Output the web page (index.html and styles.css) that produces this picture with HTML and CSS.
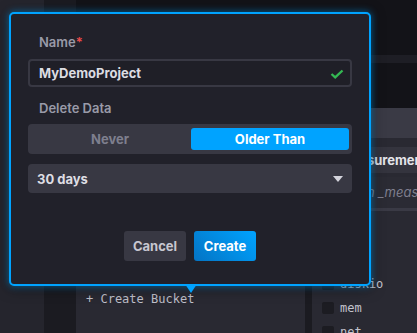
FILE: index.html
```html
<html>

<head>
	<link rel="stylesheet" href="styles.css">
</head>

<body>
	<div class="app">
		<div class="nav"></div>
		<div class="gutter"></div>
		<div class="main">
			<div class="topBar">
				<div class="topBand"></div>
			</div>
			<div class="panels">
				<div class="panel bucketPanel">
					<div class="panelBody"></div>
					<div class="createBucket">+ Create Bucket</div>
				</div>
				<div class="divider"></div>
				<div class="panel tagPanel">
					<div class="panelHeader"></div>
					<div class="tagSelect">_measurement</div>
					<div class="tagSearch">Search _measurement</div>
					<div class="tagList">
						<div class="tagItem"><span class="checkbox"></span>cpu</div>
						<div class="tagItem"><span class="checkbox"></span>disk</div>
						<div class="tagItem"><span class="checkbox"></span>diskio</div>
						<div class="tagItem"><span class="checkbox"></span>mem</div>
						<div class="tagItem"><span class="checkbox"></span>net</div>
					</div>
				</div>
			</div>
		</div>
	</div>

	<div class="popover">
		<div class="fieldLabel">Name<span class="required">*</span></div>
		<div class="textInput">
			<span class="inputValue">MyDemoProject</span>
			<svg class="check" width="14" height="10" viewBox="0 0 14 10">
				<polyline points="1.5,5 5.2,8.4 12.5,1.5" fill="none" stroke="#34b853" stroke-width="2.3" />
			</svg>
		</div>
		<div class="fieldLabel spaced">Delete Data</div>
		<div class="toggle">
			<div class="toggleButton">Never</div>
			<div class="toggleButton active">Older Than</div>
		</div>
		<div class="dropdown">
			<span>30 days</span>
			<span class="caretDown"></span>
		</div>
		<div class="actions">
			<div class="button">Cancel</div>
			<div class="button primary">Create</div>
		</div>
		<div class="popoverCaret"></div>
	</div>
</body>

</html>
```

FILE: styles.css
```css
html,
body {
	margin: 0;
	width: 417px;
	height: 333px;
	overflow: hidden;

	background-color: #131318;

	font-family: Inter, "Noto Sans", sans-serif;
	font-size: 13px;
}

.app {
	display: flex;
	height: 333px;
}

.nav {
	flex-shrink: 0;
	width: 44px;
	background-color: #25252d;
}

.gutter {
	flex-shrink: 0;
	width: 32px;
	background-color: #1b1b21;
}

.main {
	flex: 1;
	min-width: 0;
	display: flex;
	flex-direction: column;
}

.topBar {
	flex-shrink: 0;
	height: 108px;
	padding-top: 55px;
	box-sizing: border-box;
	background-color: #131318;
}

.topBand {
	height: 8px;
	background-color: #1e1e25;
}

.panels {
	flex: 1;
	min-height: 0;
	display: flex;
	overflow: hidden;
}

.panel {
	display: flex;
	flex-direction: column;
	background-color: #292932;
}

.bucketPanel {
	flex-shrink: 0;
	width: 229px;
}

.panelBody {
	flex-shrink: 0;
	height: 183px;
}

.createBucket {
	padding-left: 10px;

	font-family: "DejaVu Sans Mono", "Liberation Mono", monospace;
	font-size: 12px;
	line-height: 16px;
	color: #bfbfc9;
}

.divider {
	flex-shrink: 0;
	width: 7px;
	background-color: #1b1b21;
}

.tagPanel {
	flex: 1;
	min-width: 0;
	white-space: nowrap;
	overflow: hidden;
}

.panelHeader {
	flex-shrink: 0;
	height: 30px;
	margin-bottom: 9px;
	background-color: #3a3a45;
}

.tagSelect {
	flex-shrink: 0;
	height: 26px;
	padding-left: 21px;
	margin-bottom: 4px;

	background-color: #34343e;

	line-height: 26px;
	font-weight: 700;
	color: #e4e4ea;
}

.tagSearch {
	flex-shrink: 0;
	height: 31px;
	padding-left: 19px;

	border-bottom: 3px solid #3a3a45;
	background-color: #2b2b34;

	line-height: 31px;
	font-style: italic;
	color: #7f7f8e;
}

.tagList {
	flex-shrink: 0;
	padding-top: 13px;
}

.tagItem {
	display: flex;
	align-items: center;
	height: 24px;
	padding-left: 10px;

	font-family: "DejaVu Sans Mono", "Liberation Mono", monospace;
	font-size: 12px;
	color: #c3c3cd;
}

.checkbox {
	width: 12px;
	height: 12px;
	margin-right: 6px;

	border-radius: 2px;
	background-color: #1c1c22;
}

.popover {
	position: absolute;
	left: 9px;
	top: 12px;
	width: 324px;
	padding: 18px 17px 23px;

	border: 2px solid #00a3ff;
	border-radius: 5px;
	background-color: #21212a;
	box-shadow: 0 0 7px 1px rgba(0, 163, 255, 0.45), 0 2px 14px rgba(0, 0, 0, 0.5);
}

.fieldLabel {
	height: 20px;
	padding-left: 11px;
	margin-bottom: 7px;

	line-height: 20px;
	font-weight: 600;
	color: #999aa8;
}

.fieldLabel.spaced {
	margin-top: 11px;
	margin-bottom: 6px;
}

.required {
	color: #ef4b4b;
}

.textInput {
	display: flex;
	align-items: center;
	height: 24px;
	padding: 0 6px 0 9px;

	border: 2px solid #383843;
	border-radius: 4px;
	background-color: #1f1f27;
}

.inputValue {
	flex: 1;
	font-weight: 700;
	color: #dcdce2;
}

.check {
	margin-top: 1px;
}

.toggle {
	display: flex;
	gap: 2px;
	height: 22px;
	padding: 4px 3px;

	border-radius: 4px;
	background-color: #383843;
}

.toggleButton {
	flex: 1;

	border-radius: 3px;

	line-height: 22px;
	text-align: center;
	font-weight: 700;
	color: #7e7f8e;
}

.toggleButton.active {
	background-color: #00a3ff;
	color: white;
}

.dropdown {
	display: flex;
	align-items: center;
	justify-content: space-between;
	height: 29px;
	margin-top: 10px;
	padding: 0 9px;

	border-radius: 4px;
	background-color: #383843;

	font-weight: 700;
	color: #dedee4;
}

.caretDown {
	width: 0;
	height: 0;

	border-left: 5px solid transparent;
	border-right: 5px solid transparent;
	border-top: 6px solid #d4d4dc;
}

.actions {
	display: flex;
	justify-content: center;
	gap: 8px;
	margin-top: 38px;
}

.button {
	width: 62px;
	height: 30px;

	border-radius: 3px;
	background-color: #383843;

	line-height: 30px;
	text-align: center;
	font-weight: 700;
	color: #c7c7d0;
}

.button.primary {
	background: linear-gradient(45deg, #0474c4, #00a3ff);
	color: white;
}

.popoverCaret {
	position: absolute;
	left: 174px;
	bottom: -9px;
	width: 0;
	height: 0;

	border-left: 6px solid transparent;
	border-right: 6px solid transparent;
	border-top: 9px solid #00a3ff;
}
```
